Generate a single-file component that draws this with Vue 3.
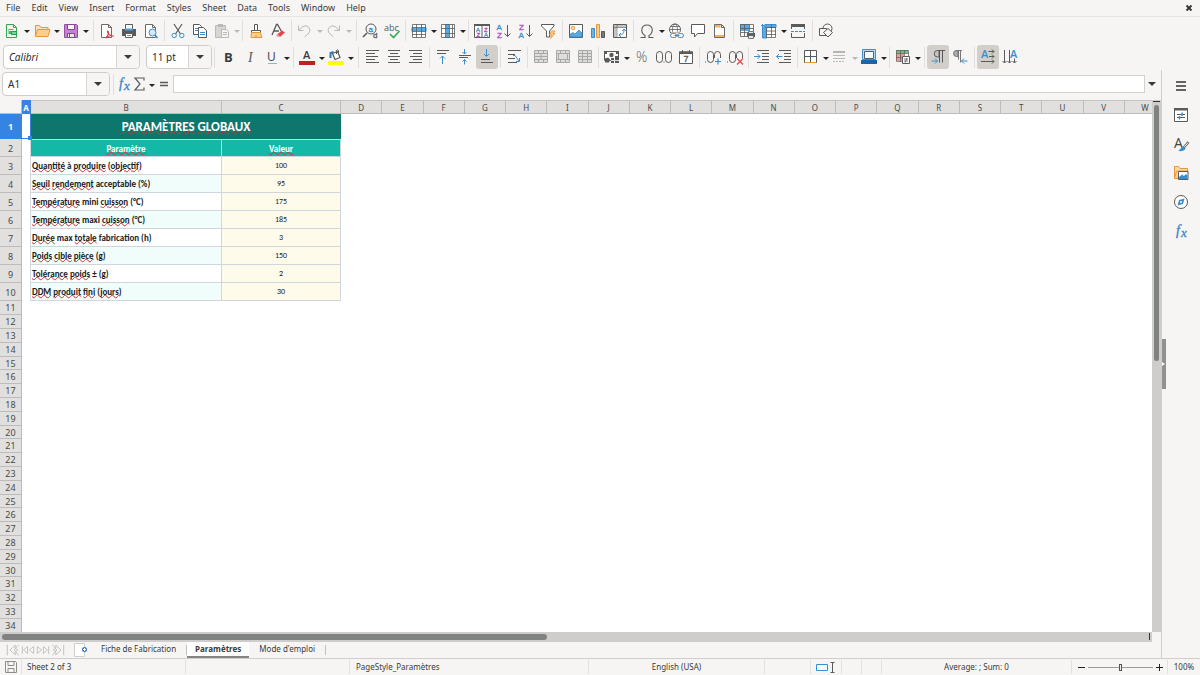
<script setup>
import { ref } from 'vue'

const menus = ['File', 'Edit', 'View', 'Insert', 'Format', 'Styles', 'Sheet', 'Data', 'Tools', 'Window', 'Help']

const D = '#5a5a5a'
const B = '#3a8ed0'
const G = '#b9b9b7'
const O = '#e8963c'

const page = (c, f = '#fff') => `<path d="M2.500 1.500h7l3 3v10h-10z M9.500 1.500v3h3" fill="${f}" stroke="${c}"/>`
const lines = (c, list) => list.map(([x, y, w]) => `<path d="M${x} ${y}.5h${w}" stroke="${c}"/>`).join('')
const txt = (x, y, s, c, t, extra = '') => `<text x="${x}" y="${y}" font-size="${s}" fill="${c}" font-family="Open Sans, Noto Sans, sans-serif" ${extra}>${t}</text>`
const letter = (x, y, s, c, t) => `<text x="${x}" y="${y}" font-size="${s}" fill="${c}" stroke="${c}" stroke-width=".3" font-family="Liberation Sans, sans-serif">${t}</text>`
const merge = (inner) => `<path d="M1.500 1.500h13v12h-13z" fill="#dededc" stroke="#a8a8a6"/><path d="M1.500 4.500h13 M1.500 10.500h13 M5.500 1.500v3 M10.500 1.500v3 M5.500 10.500v3 M10.500 10.500v3 ${inner}" fill="none" stroke="#a8a8a6"/>`
const redoPath = (c) => `<path d="M13.500 2.500v5h-5 M13 7l-4-3.500a4.500 4.500 0 0 0-6 6.500l4.500 4" fill="none" stroke="${c}"/>`
const digit = (x) => `<rect x="${x}" y="2.500" width="6" height="11" rx="3" fill="none" stroke="${D}"/>`

const icons = {
  new: page('#35a853', '#eefaf0') + `<path d="M4.500 6h5v5h-5z" fill="#4fb56a"/><path d="M7 8h6v4h-6z" fill="#2f9e4c"/><path d="M5 7.500h5 M8 10h4" stroke="#e7f7ea"/>`,
  open: `<path d="M1.500 12.500v-10h4l1.500 2h7v3" fill="#fbe0b8" stroke="${O}"/><path d="M1.500 13.500l2-7h12.500l-2 7z" fill="#fbd08f" stroke="${O}"/>`,
  save: `<path d="M1.500 1.500h12l1 1v12h-13z" fill="#c583cf" stroke="#9a4aa8"/><path d="M4.500 1.500h7v5h-7z" fill="#fff" stroke="#8e3f9d"/><path d="M4.500 10.500h7v4h-7z" fill="#f3e3f5" stroke="#8e3f9d"/><path d="M6.500 11v3" stroke="#8e3f9d"/>`,
  pdf: page('#6b6b6b') + `<path d="M7 14.500c3-3 3-6 1.800-6.500-1 1 .8 5 6 5.200-3-.8-6.500 0-8 2" fill="none" stroke="#d8414b" stroke-width="1.100"/>`,
  print: `<path d="M1 6h14v7h-14z" fill="#5a5a5a"/><path d="M4.500 1.500h7v5h-7z" fill="#fff" stroke="#5a5a5a"/><path d="M4 5.500h8v2h-8z" fill="#4ba0dc"/><path d="M4.500 10.500h7v4h-7z" fill="#fff" stroke="#5a5a5a"/><path d="M6 12.500h4" stroke="#8a8a8a"/>`,
  preview: page('#6b6b6b') + `<circle cx="9.500" cy="9.500" r="3.500" fill="#d5e9f7" stroke="${B}"/><path d="M12 12l2.500 3" stroke="${B}" stroke-width="1.500"/>`,
  cut: `<path d="M4 1l6.500 10 M12 1l-6.500 10" stroke="${D}" fill="none" stroke-width="1.200"/><circle cx="4.200" cy="12.500" r="2.200" fill="none" stroke="${B}"/><circle cx="11.800" cy="12.500" r="2.200" fill="none" stroke="${B}"/>`,
  copy: `<path d="M1.500 1.500h6l2 2v8h-8z" fill="#fff" stroke="${D}"/><path d="M6.500 4.500h5l3 3v7h-8z" fill="#fff" stroke="${D}"/>` + lines(B, [[3, 5, 3], [3, 7, 3], [8, 9, 5], [8, 11, 5]]),
  paste: `<path d="M1.500 2.500h10v12h-10z" fill="#d6d6d4" stroke="${G}"/><path d="M4 1h5v3h-5z" fill="${G}"/><path d="M7.500 6.500h5l2 2v6h-7z" fill="#f4f4f3" stroke="${G}"/>` + lines(G, [[9, 9, 4], [9, 11, 4]]),
  clone: `<path d="M6.500 1.500h3v6h-3z" fill="#fff" stroke="${D}"/><path d="M3.500 7.500h9v2h-9z" fill="#fff" stroke="${D}"/><path d="M3.500 9.500h9l1.500 5h-11z" fill="#fbd08f" stroke="${O}"/><path d="M8 12v2" stroke="${O}"/>`,
  clear: `<path d="M2 12l4.500-10.500h1l4 7 M4 8h5" fill="none" stroke="${D}" stroke-width="1.300"/><path d="M7 11.500l5-4 3 2-5 4.500z" fill="#e1484f"/><path d="M6 12.500l1.500-1.500 3 3h-3z" fill="#f2a0a4"/>`,
  undo: `<g transform="translate(15 0) scale(-1 1)">${redoPath(G)}</g>`,
  redo: redoPath(G),
  find: `<circle cx="9" cy="6" r="5" fill="#f2f8fd" stroke="${D}"/>` + letter(6.500, 9, 8, B, 'a') + `<path d="M5 10l-4 4" stroke="${D}" stroke-width="1.600"/>` + letter(11, 15, 8, D, 'd'),
  spell: txt(0, 7.500, 9, D, 'abc') + `<path d="M6 11l3.500 3.500 6-6.500" fill="none" stroke="#3aa85b" stroke-width="1.600"/>`,
  row: `<path d="M1.500 1.500h13v13h-13z" fill="#fff"/><path d="M1 4.500h14v4h-14z" fill="#5aa9e0" stroke="${B}"/><path d="M1.500 1.500h13v13h-13z M1.500 11.500h13 M5.500 1.500v13 M10.500 1.500v13" fill="none" stroke="${D}" stroke-opacity=".8"/>`,
  col: `<path d="M1.500 1.500h13v13h-13z" fill="#fff"/><path d="M5.500 1.500h4v13h-4z" fill="#5aa9e0" stroke="${B}"/><path d="M1.500 1.500h13v13h-13z M1.500 5.500h13 M1.500 10.500h13 M12.500 1.500v13" fill="none" stroke="${D}" stroke-opacity=".8"/>`,
  sort: `<path d="M0.500 1.500h15v13h-15z" fill="#fff" stroke="${D}"/><path d="M0 1h16v2h-16z" fill="${D}"/><path d="M8 2v12" stroke="${D}"/>` + letter(2, 8.500, 6, B, 'A') + letter(2.500, 14, 6, '#b045c0', 'Z') + letter(10, 8.500, 6, '#b045c0', 'Z') + letter(10, 14, 6, B, 'A'),
  az: letter(0.500, 7, 8, B, 'A') + letter(1, 15, 8, '#b045c0', 'Z') + `<path d="M11.500 2v11.500 M8.500 10.500l3 3 3-3" fill="none" stroke="${D}"/>`,
  za: letter(1, 7, 8, '#b045c0', 'Z') + letter(0.500, 15, 8, B, 'A') + `<path d="M11.500 2v11.500 M8.500 10.500l3 3 3-3" fill="none" stroke="${D}"/>`,
  filter: `<path d="M1.500 1.500h12.500v1.500l-4.500 5v6h-3v-6l-5-5z" fill="#fff" stroke="${D}"/><path d="M11.500 8h3.500l-2 2.500h2l-4.500 5 1-3.500h-2z" fill="#f9c784" stroke="${O}" stroke-width=".8"/>`,
  image: `<path d="M1.500 1.500h13v13h-13z" fill="#fff" stroke="${D}"/><circle cx="5" cy="5" r="1.800" fill="#fbd08f" stroke="${O}" stroke-width=".8"/><path d="M2 14v-2.500l3-2 2 1.500 4-4 3 3v4z" fill="#5aa9e0" stroke="${B}" stroke-width=".8"/>`,
  chart: `<path d="M1.500 5.500h3v9h-3z" fill="#6cb3e6" stroke="${B}"/><path d="M6.500 1.500h3v13h-3z" fill="#fbd08f" stroke="${O}"/><path d="M11.500 8.500h3v6h-3z" fill="#777" stroke="${D}"/>`,
  pivot: `<path d="M1.500 1.500h13v13h-13z" fill="#fff" stroke="${D}"/><path d="M2 2h12v2.500h-12z M2 4h2.500v10h-2.500z" fill="#c4c4c2"/><path d="M5 2v12 M2 4.500h12" stroke="${D}" stroke-width=".6"/><path d="M7 12c4 0 5-2 5-5.500 M10.300 8l1.700-2 1.800 2 M9 10l-2 2 2 2" fill="none" stroke="${B}"/>`,
  omega: `<path d="M1.500 14.500h4.500v-2c-5-3-4-10.500 2-10.500s7 7.500 2 10.500v2h4.500" fill="none" stroke="${D}" stroke-width="1.100"/>`,
  link: `<circle cx="7" cy="6.500" r="5.500" fill="#fff" stroke="${D}"/><ellipse cx="7" cy="6.500" rx="2.500" ry="5.500" fill="none" stroke="${D}" stroke-width=".8"/><path d="M1.500 6.500h11 M2.500 3.500h9 M2.500 9.500h9" stroke="${D}" stroke-width=".8"/><path d="M3 9.500h13v6h-13z" fill="#f6f5f4"/><rect x="2.500" y="10.500" width="6" height="4" rx="2" fill="none" stroke="${B}"/><rect x="9.500" y="10.500" width="6" height="4" rx="2" fill="none" stroke="${B}"/><path d="M6.500 12.500h5" stroke="${B}"/>`,
  comment: `<path d="M1.500 1.500h13v9h-7l-3 3.500v-3.500h-3z" fill="#fff" stroke="${D}"/>`,
  header: page('#6a6a6a') + `<path d="M3 2h5.500v2.500h-5.500z M3 12h9v2h-9z" fill="#f3b061"/>`,
  area: `<path d="M1 1h13v12h-13z" fill="#fff"/><path d="M1 1h9v7h-9z" fill="#5aa9e0"/><path d="M1.500 1.500h13v12h-13z M1.500 5.500h13 M1.500 9.500h13 M5.500 1.500v12 M10.500 1.500v12" fill="none" stroke="${D}" stroke-opacity=".8"/><path d="M8 10h8v4h-8z" fill="${D}"/><path d="M9.500 8.500h5v2h-5z M9.500 12.500h5v3h-5z" fill="#dcebf6" stroke="${D}" stroke-width=".8"/>`,
  freeze: `<path d="M2 2h13v13h-13z" fill="#fff"/><path d="M4 1.500h11v3h-11z M1.500 4h4v11h-4z" fill="#5aa9e0" stroke="${B}"/><path d="M5.500 4.500h9v10h-9z M5.500 8h9.500 M5.500 11.500h9.500 M10.500 1.500v13" fill="none" stroke="${D}" stroke-width=".8"/><path d="M1.500 1v4 M0 2.500h4" stroke="${B}"/>`,
  split: `<path d="M1 1h14v3h-14z" fill="${D}"/><path d="M1.500 3.500v2.500 M14.500 3.500v2.500 M1.500 10v4.500h13v-4.500" fill="none" stroke="${D}"/><path d="M1 8.500h14" stroke="${B}" stroke-dasharray="3 1"/>`,
  draw: `<circle cx="9.500" cy="5.500" r="4.500" fill="#f6f5f4" stroke="${D}"/><path d="M1.500 5.500h7v7h-7z" fill="#f6f5f4" stroke="${D}"/><path d="M10 5.500l4.500 4-4.500 4.500-4.500-4.500z" fill="#f6f5f4" stroke="${D}"/>`,
  bold: txt(4, 13, 13, '#3b3b3b', 'B', 'font-weight="700"'),
  italic: `<text x="6" y="13" font-size="14" font-style="italic" fill="${D}" font-family="Liberation Serif, serif">I</text>`,
  underline: txt(3, 12, 12, '#444', 'U') + `<path d="M4 14.500h9" stroke="#7db7e6"/>`,
  color: txt(4, 10, 11, '#3c3c3c', 'A', 'font-weight="600"') + `<path d="M0 12h16v4h-16z" fill="#c0211f"/>`,
  fill: `<path d="M4.500 4.500l5-2 2.500 6-5 2z" fill="#fff" stroke="${D}" stroke-width="1.200"/><path d="M8.500 5v-3.500q1-1.500 2 0v3" fill="none" stroke="${D}"/><path d="M2.500 9v-5l3-1" fill="none" stroke="#2d79b8" stroke-width="2"/><path d="M0 12h16v4h-16z" fill="#ffff00"/>`,
  left: lines(D, [[2, 1, 13], [2, 4, 9], [2, 7, 12], [2, 10, 9], [2, 13, 13]]),
  center: lines(D, [[2, 1, 12], [4, 4, 8], [2, 7, 12], [4, 10, 8], [2, 13, 12]]),
  right: lines(D, [[1, 1, 13], [5, 4, 9], [2, 7, 12], [5, 10, 9], [1, 13, 13]]),
  top: lines(D, [[2, 1, 12], [2, 4, 9]]) + `<path d="M7.500 15v-8 M5 9.500l2.500-2.500 2.500 2.500" fill="none" stroke="${B}"/>`,
  middle: lines(D, [[2, 6, 12], [2, 8, 9]]) + `<path d="M7.500 0v5 M5.500 3l2 2 2-2 M7.500 15.500v-5 M5.500 12.500l2-2 2 2" fill="none" stroke="${B}"/>`,
  bottom: lines(D, [[2, 10, 9], [2, 13, 12]]) + `<path d="M7.500 0v7 M5 5l2.500 2.500 2.500-2.500" fill="none" stroke="${B}"/>`,
  wrap: lines(D, [[2, 1, 13], [2, 5, 7], [2, 9, 7], [2, 13, 9]]) + `<path d="M7 6.500h2l4 5.500 M10 12.500h3.500v-3.500" fill="none" stroke="${B}"/>`,
  merge1: merge('M1.500 7.500h13 M8 4.500v6'),
  merge2: merge('M3.500 4.500v6 M12.500 4.500v6'),
  merge3: merge('M5.500 4.500v6 M10.500 4.500v6 M1.500 7.500h13'),
  currency: `<path d="M0.500 2.500h14v9h-14z" fill="#fff" stroke="${D}"/><circle cx="7.500" cy="6" r="2.200" fill="${D}"/><path d="M0 2h3v3h-3z M12 2h3v3h-3z" fill="${D}"/><path d="M1 9.500c2-1 4-1 5 1l-1 3h-4z M7 9h3v5h-3z M11 7h4v7h-4z" fill="${D}"/><path d="M7 11.500h8" stroke="#ddd"/>`,
  percent: txt(2, 13, 14, D, '%', 'font-weight="300"'),
  number: digit(0.500) + digit(9.500) + `<path d="M7.500 12.500h1v1h-1z" fill="${D}"/>`,
  date: `<path d="M1.500 3h13v11.500h-13z" fill="#fff" stroke="${D}"/><path d="M1 2.500h14v2.500h-14z" fill="${D}"/><path d="M4.500 1v2 M11.500 1v2" stroke="${D}"/>` + letter(5.500, 13, 9, D, '7'),
  addDec: `<path d="M0 12.500h1v1h-1z" fill="${D}"/>` + digit(2.500) + digit(9.500) + `<path d="M9 9h7v7h-7z" fill="#f6f5f4"/><path d="M10 12.500h6 M13 9.500v6" stroke="${B}" stroke-width="1.200"/>`,
  delDec: `<path d="M0 12.500h1v1h-1z" fill="${D}"/>` + digit(2.500) + digit(9.500) + `<path d="M9 9h7v7h-7z" fill="#f6f5f4"/><path d="M10 9.500l6 6 M16 9.500l-6 6" stroke="#df4a4a" stroke-width="1.200"/>`,
  indent: lines(D, [[3, 1, 12], [8, 4, 7], [8, 7, 7], [8, 10, 7], [3, 13, 12]]) + `<path d="M0 7.500h6 M3.500 5l2.500 2.500-2.500 2.500" fill="none" stroke="${B}"/>`,
  outdent: lines(D, [[3, 1, 12], [8, 4, 7], [8, 7, 7], [8, 10, 7], [3, 13, 12]]) + `<path d="M0.500 7.500h6 M3 5l-2.500 2.500 2.500 2.500" fill="none" stroke="${B}"/>`,
  border: `<path d="M1.500 1.500h12v12h-12z M7.500 1.500v12 M1.500 7.500h12" fill="#fff" stroke="${D}"/><path d="M2 13.500h11" stroke="${O}"/>`,
  style: `<path d="M1 2h12v2h-12z" fill="#b5b5b3"/><path d="M1 6.500h12 M1 9.500h12" stroke="${G}"/><path d="M1 12.500h12" stroke="${G}" stroke-dasharray="2 1"/>`,
  frame: `<path d="M1.500 0.500h13v10h-13z" fill="#b9dbf3" stroke="${B}"/><path d="M3.500 2.500h9v7h-9z" fill="#fafafa" stroke="${D}"/><path d="M0 11h16v4h-16z" fill="#1d63a8"/>`,
  cond: `<path d="M1 1h12v12h-12z" fill="#fff"/><path d="M1 1h12v3h-12z" fill="#6fc27e"/><path d="M1 4h8v8h-8z" fill="#ee9b93"/><path d="M1.500 1.500h12v11h-12z M1.500 4.500h12 M1.500 8.500h12 M5.500 1.500v11 M9.500 1.500v11" fill="none" stroke="${D}" stroke-width=".7"/><path d="M7.500 7.500h7v7h-7z" fill="#fff" stroke="${D}"/><path d="M9 10h4 M9 12h4 M12 9l-2 4.500" stroke="${D}" stroke-width=".8"/>`,
  ltr: `<path d="M8 1.500h7 M9.500 1.500v12 M12.500 1.500v12" stroke="${D}" fill="none"/><path d="M9 1.500h-1.500a3 3 0 0 0 0 6.500h1.500z" fill="#c8c5c0" stroke="${D}"/><path d="M1.500 12h6 M5 9.500l2.500 2.500-2.500 2.500" fill="none" stroke="${B}"/>`,
  rtl: `<path d="M4 1.500h6 M6.500 1.500v9 M8.500 1.500v12" stroke="#777" fill="none"/><path d="M6 1.500h-1.500a3 3 0 0 0 0 6h1.500z" fill="#aaa" stroke="#777"/><path d="M9.500 12h6 M12 9.500l-2.500 2.500 2.500 2.500" fill="none" stroke="${B}"/>`,
  horiz: txt(1, 9, 11, B, 'A', 'font-weight="600"') + `<path d="M8.500 2.500h5.500 M12 0.500l2 2-2 2 M9 7.500h5 M12 5.500l2 2-2 2 M1 12.500h13 M12 10.500l2 2-2 2" fill="none" stroke="${D}"/>`,
  vert: txt(8, 9, 11, B, 'A', 'font-weight="600"') + `<path d="M2.500 1v13 M0.500 12l2 2 2-2 M7.500 1v13 M5.500 12l2 2 2-2 M12.500 9.500v4.500 M10.500 12l2 2 2-2" fill="none" stroke="${D}"/>`,
  fx: `<g fill="#3584c8" stroke="#3584c8" stroke-width=".3" font-style="italic" font-family="Liberation Serif, serif"><text x="3" y="12" font-size="14">f</text><text x="8" y="14" font-size="13">x</text></g>`,
  sum: `<path d="M12 4.500v-2.500h-9l5 6-5 6h9v-2.500" fill="none" stroke="${D}" stroke-width="1.200"/>`,
  equals: `<path d="M4 6.500h8 M4 9.500h8" stroke="${D}" stroke-width="1.500"/>`,
  burger: `<path d="M3 4h10 M3 8h10 M3 12h10" stroke="#333" stroke-width="1.500"/>`,
  props: `<path d="M1.500 1.500h13v13h-13z" fill="#fff" stroke="${D}"/><path d="M1 1h14v2.500h-14z" fill="${D}"/><path d="M4 7.500h8 M4 10.500h8" stroke="${D}"/><path d="M9 5.500v3.500 M6.500 9v3.500" stroke="${B}" stroke-width="1.400"/>`,
  styles: txt(1, 12, 14, '#444', 'A') + `<path d="M15.500 6l-5 6" stroke="${D}" stroke-width="2.400"/><path d="M15 6.500l-4 5" stroke="#fff"/><path d="M10.500 10.500l2 1.800c-1 3-4 3-8 2.700 3-.5 3-4 6-4.500z" fill="${B}"/>`,
  gallery: `<path d="M1.500 13.500v-12h4l1.500 2h7.500v3" fill="#fbd9a8" stroke="${O}"/><path d="M1.500 13.500l2-7.500h11.500l-1 7.500z" fill="#fbd08f" stroke="${O}"/><path d="M5.500 6.500h9.500v8h-9.500z" fill="#fff" stroke="${D}"/><path d="M6 14v-2l3-2.500 2 1.500 2-2 1.500 1.500v3.500z" fill="#3a8ed0"/>`,
  nav: `<circle cx="8" cy="8" r="6.500" fill="#fff" stroke="${D}"/><path d="M11.500 4.500l-1.500 5.500-5.500 1.500 1.500-5.500z" fill="#3a8ed0"/><circle cx="8" cy="8" r="1" fill="#fff"/>`,
  close: `<path d="M5.500 5.500l5 5 M10.500 5.500l-5 5" stroke="#333" stroke-width="1.800"/>`,
  first: `<path d="M1.500 2v12 M14.500 2l-5 6 5 6 M10.500 2.500l-6 5.500 6 5.500v-3.500l3-2-3-2z" fill="none" stroke="#bcbcba"/>`,
  prev: `<path d="M1.500 3.500v9 M7.500 4l-4.500 4 4.500 4z M14.500 4l-5 4 5 4z" fill="none" stroke="#bcbcba"/>`,
  next: `<path d="M14.500 3.500v9 M8.500 4l4.500 4-4.500 4z M1.500 4l5 4-5 4z" fill="none" stroke="#bcbcba"/>`,
  last: `<path d="M14.500 2v12 M1.500 2l5 6-5 6 M5.500 2.500l6 5.500-6 5.500v-3.500l-3-2 3-2z" fill="none" stroke="#bcbcba"/>`,
  addSheet: `<path d="M1.500 1.500h10v13h-10z" fill="#fff" stroke="#cfcfcd"/><circle cx="11.500" cy="7.500" r="2.500" fill="#3e78b8"/><path d="M10 7.500h3 M11.500 6v3" stroke="#fff"/>`,
  disk: `<path d="M2.500 2.500h10l1 1v10h-11z M5 2.500v4h6v-4 M5 13.500v-4h6v4" fill="none" stroke="#8d8d8b"/>`,
  selMode: `<path d="M0.500 5.500h11v6h-11z" fill="#f8fbfd" stroke="${B}"/><path d="M16.500 3.500v10 M14.500 3.500h4 M14.500 13.500h4" stroke="${D}"/>`
}

// v / V: drop-down arrow, s / S: separator (capital letter = one pixel wider)
const parse = (s) => s.split(' ')
const standardBar = parse('new V open v save V S pdf print preview s cut copy paste v- s clone clear s undo v- redo V- S find spell s row v col v s sort az za filter S image chart pivot s omega v link comment header s area freeze v split S draw')
const formatBar = parse('bold italic underline v S color v fill V S left center right s top middle bottom* s wrap s merge1 merge2 merge3 s currency V percent number date s addDec delDec s indent outdent s border v style v- frame v s cond V s ltr* rtl S horiz* vert')
const bars = [standardBar, formatBar]
const isArrow = (t) => /^[vV]-?$/.test(t)
const isSep = (t) => /^[sS]$/.test(t)
const bare = (t) => t.replace('*', '')

const side = ['burger', 'props', 'styles', 'gallery', 'nav', 'fx']
const sheetNav = ['first', 'prev', 'next', 'last']

const columns = 'DEFGHIJKLMNOPQRSTUVW'.split('')
// words between underscores are flagged by the spelling checker
const rows = [
  ['_Quantité_ à _produire_ (_objectif_)', 100],
  ['_Seuil_ _rendement_ acceptable (%)', 95],
  ['_Température_ mini _cuisson_ (°C)', 175],
  ['_Température_ maxi _cuisson_ (°C)', 185],
  ['_Durée_ max _totale_ fabrication (h)', 3],
  ['_Poids_ _cible_ _pièce_ (g)', 150],
  ['_Tolérance_ _poids_ ± (g)', 2],
  ['_DDM_ _produit_ _fini_ (_jours_)', 30]
].map(([label, value]) => ({ parts: label.split('_'), value }))

const fontName = ref('Calibri')
const fontSize = ref('11 pt')
const cellName = ref('A1')
const formula = ref('')
const zoom = ref(50)
</script>

<template>
  <div class="app">
    <nav class="menubar">
      <button v-for="m in menus" :key="m" class="menu">{{ m }}</button>
      <button class="tool close" aria-label="Close"><svg viewBox="0 0 16 16" v-html="icons.close"></svg></button>
    </nav>

    <div v-for="(bar, n) in bars" :key="n" class="toolbar" :class="{ format: n === 1 }">
      <template v-if="n === 1">
        <div class="combo font"><input v-model="fontName" aria-label="Font name"><button aria-label="Font list"><i class="tri big"></i></button></div>
        <div class="combo size"><input v-model="fontSize" aria-label="Font size"><button aria-label="Size list"><i class="tri big"></i></button></div>
        <span class="sep"></span>
      </template>
      <template v-for="(t, i) in bar" :key="i">
        <span v-if="isSep(t)" class="sep" :class="{ wide: t === 'S' }"></span>
        <button v-else-if="isArrow(t)" class="arrow" :class="{ wide: t[0] === 'V', off: t.length > 1 }" aria-label="More options"><i class="tri"></i></button>
        <button v-else class="tool" :class="{ on: t.endsWith('*') }" :aria-label="bare(t)"><svg viewBox="0 0 16 16" v-html="icons[bare(t)]"></svg></button>
      </template>
    </div>

    <div class="body">
      <main class="work">
        <div class="formula-bar">
          <div class="combo name"><input v-model="cellName" aria-label="Name box"><button aria-label="Named ranges"><i class="tri big"></i></button></div>
          <span class="sep wide"></span>
          <button class="tool narrow" aria-label="Function wizard"><svg viewBox="0 0 16 16" v-html="icons.fx"></svg></button>
          <button class="tool narrow" aria-label="Sum"><svg viewBox="0 0 16 16" v-html="icons.sum"></svg></button>
          <button class="arrow wide" aria-label="Sum options"><i class="tri"></i></button>
          <button class="tool narrow" aria-label="Formula"><svg viewBox="0 0 16 16" v-html="icons.equals"></svg></button>
          <input v-model="formula" class="formula" aria-label="Formula input">
          <button class="expand" aria-label="Expand formula bar"><i class="tri big"></i></button>
        </div>

        <div class="grid-area">
          <div class="sheet">
            <table>
              <colgroup>
                <col class="c-num"><col class="c-a"><col class="c-b"><col class="c-c"><col v-for="c in columns" :key="c">
              </colgroup>
              <thead>
                <tr>
                  <th class="corner"></th>
                  <th class="sel">A</th>
                  <th>B</th>
                  <th>C</th>
                  <th v-for="c in columns" :key="c">{{ c }}</th>
                </tr>
              </thead>
              <tbody>
                <tr class="title-row">
                  <th class="sel">1</th>
                  <td class="cursor"></td>
                  <td colspan="2" class="title"><u>PARAMÈTRES</u> <u>GLOBAUX</u></td>
                </tr>
                <tr class="data">
                  <th>2</th>
                  <td class="edge"></td>
                  <td class="head"><u>Paramètre</u></td>
                  <td class="head"><u>Valeur</u></td>
                </tr>
                <tr v-for="(r, i) in rows" :key="i" class="data">
                  <th>{{ i + 3 }}</th>
                  <td class="edge"></td>
                  <td class="label" :class="{ tint: i % 2 }"><template v-for="(p, k) in r.parts" :key="k"><u v-if="k % 2">{{ p }}</u><template v-else>{{ p }}</template></template></td>
                  <td class="value">{{ r.value }}</td>
                </tr>
                <tr v-for="n in 24" :key="n" class="blank" :class="{ low: n % 5 === 0 }">
                  <th>{{ n + 10 }}</th>
                </tr>
              </tbody>
            </table>
          </div>
          <div class="vscroll"><i class="tick"></i><i class="thumb"></i></div>
        </div>
        <div class="hscroll"><i class="thumb"></i><i class="tick"></i></div>

        <div class="tabs">
          <button v-for="s in sheetNav" :key="s" class="nav-btn" :aria-label="s"><svg viewBox="0 0 16 16" v-html="icons[s]"></svg></button>
          <button class="add" aria-label="Add sheet"><svg viewBox="0 0 16 16" v-html="icons.addSheet"></svg></button>
          <button class="tab">Fiche de Fabrication</button>
          <span class="divider"></span>
          <button class="tab active">Paramètres</button>
          <button class="tab">Mode d'emploi</button>
          <span class="divider"></span>
        </div>
      </main>

      <aside class="sidebar">
        <button v-for="s in side" :key="s" class="side-btn" :aria-label="s"><svg viewBox="0 0 16 16" v-html="icons[s]"></svg></button>
        <button class="handle" aria-label="Hide sidebar"></button>
      </aside>
    </div>

    <footer class="status">
      <span class="mid"><svg viewBox="0 0 16 16" v-html="icons.disk"></svg></span>
      <span>Sheet 2 of 3</span>
      <span></span>
      <span class="style-name">PageStyle_Paramètres</span>
      <span class="mid">English (USA)</span>
      <span></span>
      <span class="mid"><svg class="sel-mode" viewBox="0 0 20 16" v-html="icons.selMode"></svg></span>
      <span></span>
      <span></span>
      <span class="mid">Average: ; Sum: 0</span>
      <span class="zoom">
        <button aria-label="Zoom out"><i class="minus"></i></button>
        <input v-model="zoom" type="range" min="0" max="100" aria-label="Zoom">
        <button aria-label="Zoom in"><i class="minus plus"></i></button>
      </span>
      <span class="mid">100%</span>
    </footer>
  </div>
</template>

<style>
html, body { margin: 0; background: #f6f5f4; }
</style>

<style scoped>
* { box-sizing: border-box; }
.app { display: flex; flex-direction: column; height: 100vh; overflow: hidden; background: #f6f5f4; color: #3a3a3a; font: 9px/12px "Noto Sans", sans-serif; }
button { margin: 0; padding: 0; border: 0; background: none; color: inherit; font: inherit; }
input { font: inherit; color: #2b2b2b; }
svg { display: block; width: 16px; height: 16px; overflow: visible; flex: none; }

.menubar { display: flex; align-items: center; gap: 11px; height: 17px; flex: none; padding: 0 0 0 6px; border-bottom: 1px solid #e6e5e3; }
.close { margin-left: auto; }

.toolbar { display: flex; align-items: center; height: 27px; flex: none; padding-left: 1px; }
.toolbar.format { height: 26px; padding-left: 3px; }
.tool { display: flex; align-items: center; justify-content: center; width: 22px; height: 24px; flex: none; border-radius: 3px; }
.tool.narrow { width: 16px; }
.tool.on { background: #d2cfcb; }
.arrow { display: flex; align-items: center; justify-content: center; width: 7px; height: 24px; padding-top: 2px; flex: none; }
.arrow.wide { width: 8px; }
.tri { display: block; border: solid transparent; border-width: 3px 3px 0; border-top-color: #222; }
.tri.big { border-width: 4px 4px 0; border-top-color: #3a3a3a; }
.off .tri { border-top-color: #b9b9b7; }
.sep { width: 5px; height: 21px; flex: none; background: linear-gradient(#e0dfdd, #e0dfdd) center / 1px 100% no-repeat; }
.sep.wide { width: 6px; }

.combo { display: flex; height: 24px; flex: none; border: 1px solid #cfccc9; border-radius: 4px; background: #fff; overflow: hidden; }
.combo input { flex: 1; min-width: 0; padding: 0 5px; border: 0; background: none; outline: 0; font-size: 10px; }
.combo button { display: flex; align-items: center; justify-content: center; width: 23px; border-left: 1px solid #d8d6d3; background: #f6f5f4; }
.font { width: 137px; margin-right: 6px; }
.font input { font-style: italic; }
.size { width: 66px; }
.name { width: 108px; }

.body { display: flex; flex: 1; min-height: 0; }
.work { display: flex; flex-direction: column; flex: 1; min-width: 0; }
.formula-bar { display: flex; align-items: center; height: 30px; flex: none; padding: 0 2px 2px; }
.formula { flex: 1; min-width: 0; height: 18px; margin-left: 1px; padding: 0 4px; border: 1px solid #d3d1ce; background: #fff; outline: 0; }
.expand { display: flex; justify-content: center; width: 14px; }

.grid-area { display: flex; flex: 1; min-height: 0; }
.sheet { flex: 1; min-width: 0; overflow: hidden; background: #fff; }
table { width: calc(100% + 14px); table-layout: fixed; border-collapse: separate; border-spacing: 0; font-size: 9px; line-height: 11px; }
.c-num { width: 22px; }
.c-a { width: 9px; }
.c-b { width: 191px; }
.c-c { width: 119px; }
th, td { padding: 0; overflow: hidden; white-space: nowrap; }
th { height: 14px; background: #e1e0de; border-right: 1px solid #bdbcba; border-bottom: 1px solid #bdbcba; color: #4a4a4a; font-weight: 400; }
thead th { border-top: 1px solid #c4c3c1; font-size: 8px; }
th.corner { background: #f6f5f4; border-color: #f6f5f4 #bdbcba #bdbcba #f6f5f4; }
th.sel { background: #3584e4; border-color: #3584e4; color: #fff; font-weight: 700; }
.title-row th { height: 25px; }
.data th { height: 18px; padding-top: 2px; }
.blank th { height: 14px; }
.blank.low th { height: 13px; }
td { font-family: Carlito, Lato, sans-serif; text-align: center; }
.cursor { position: relative; overflow: visible; border-right: 1px solid #3584e4; border-bottom: 1px solid #3584e4; }
.cursor::after { content: ""; position: absolute; right: -2px; bottom: -2px; width: 4px; height: 4px; background: #3584e4; }
.edge { border-right: 1px solid #d3dbe0; }
.title { background: #0f766e; color: #fff; font-size: 13px; font-weight: 700; }
.head { background: #14b8a6; color: #fff; font-weight: 700; border-right: 1px solid #cbd5dc; border-bottom: 1px solid #cbd5dc; border-top: 1px solid #cbd5dc; }
.label { padding-left: 1px; text-align: left; color: #1c1c1c; font-weight: 700; border-right: 1px solid #d0d7dc; border-bottom: 1px solid #d0d7dc; }
.label.tint { background: #f0fdfa; }
.value { background: #fffbeb; color: #222; font-size: 8px; border-right: 1px solid #d0d7dc; border-bottom: 1px solid #d0d7dc; }
u { text-decoration: underline wavy #e0282e 1px; text-underline-offset: -1px; text-decoration-skip-ink: none; }

.vscroll { position: relative; width: 9px; flex: none; background: #cecdcc; }
.vscroll .thumb { position: absolute; left: 2px; width: 5px; top: 5px; bottom: 51%; border-radius: 3px; background: #808281; }
.vscroll .tick { position: absolute; left: 1px; top: 1px; width: 7px; height: 1px; background: #333; }
.hscroll { position: relative; height: 10px; flex: none; margin-right: 9px; background: #cecdcc; }
.hscroll .thumb { position: absolute; left: 2px; width: 47.3%; top: 2px; height: 6px; border-radius: 3px; background: #808281; }
.hscroll .tick { position: absolute; right: 2px; top: 1px; width: 1px; height: 7px; background: #333; }

.tabs { display: flex; align-items: stretch; height: 16px; flex: none; padding-left: 5px; font-size: 8px; line-height: 12px; }
.nav-btn { display: flex; align-items: center; justify-content: center; width: 15px; }
.nav-btn svg { width: 14px; height: 14px; }
.add { margin: 0 2px 0 8px; }
.tab { padding: 0 10px; border-bottom: 2px solid transparent; }
.tab.active { padding: 0 8px; border-bottom-color: #858585; background: #fff; font-weight: 700; }
.divider { width: 1px; margin: 3px 0; background: #c2c1bf; }

.sidebar { position: relative; display: flex; flex-direction: column; align-items: center; width: 39px; flex: none; gap: 13px; padding-top: 8px; border-left: 1px solid #cfcecc; }
.handle { position: absolute; left: 0; top: 269px; width: 4px; height: 50px; background: #919190; }
.handle::after { content: ""; position: absolute; left: 0; top: 23px; border: solid transparent; border-width: 2px 0 2px 3px; border-left-color: #fff; }

.status { display: grid; grid-template-columns: 22px 164fr 164fr 239fr 176fr 46px 31px 20px 20px 190fr 96px 32px; align-items: start; height: 17px; flex: none; padding-top: 1px; border-top: 1px solid #cfcecc; font-size: 8px; line-height: 12px; }
.status > span { display: flex; align-items: center; height: 14px; padding-left: 5px; border-right: 1px solid #e2e1df; }
.status > .style-name { padding-left: 6px; }
.status > span:last-child { border: 0; }
.status > .mid { justify-content: center; padding: 0; }
.status .mid svg { width: 16px; height: 16px; }
.status .mid .sel-mode { width: 20px; height: 16px; }
.status > .zoom { gap: 2px; padding: 0 3px 0 5px; }
.zoom button { display: flex; align-items: center; justify-content: center; width: 9px; height: 12px; flex: none; }
.zoom input { flex: 1; min-width: 0; height: 12px; margin: 0; appearance: none; background: linear-gradient(#9c9c9a, #9c9c9a) center / 100% 1px no-repeat; }
.zoom input::-webkit-slider-thumb { appearance: none; width: 3px; height: 7px; border: 1px solid #555; background: #eee; }
.minus { position: relative; display: block; width: 7px; height: 1px; background: #222; }
.plus::after { content: ""; position: absolute; left: 3px; top: -3px; width: 1px; height: 7px; background: #222; }
</style>
